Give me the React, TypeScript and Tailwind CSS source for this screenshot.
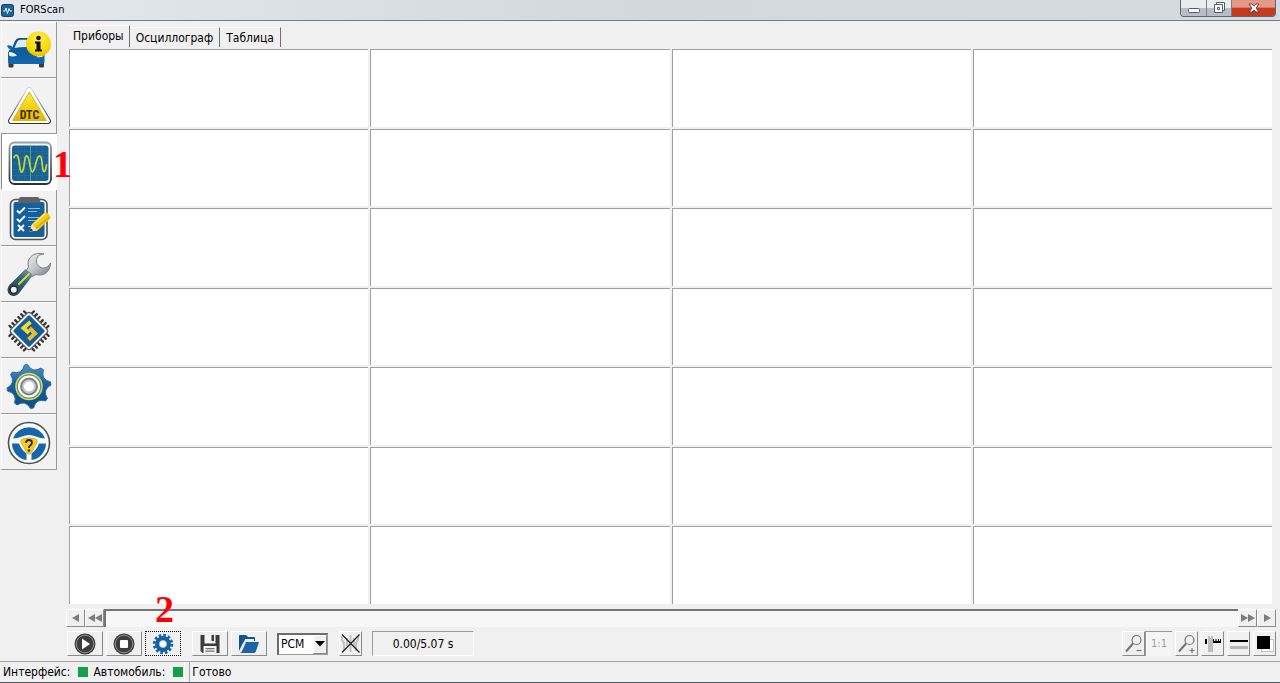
import { useState, type ReactNode } from "react"

const raised = "border border-t-white border-l-white border-r-[#8a8a8a] border-b-[#8a8a8a] bg-[#f0f0f0]"

function CarIcon() {
    return (
        <svg viewBox="0 0 55 55" className="h-[55px] w-[55px]">
            <defs>
                <linearGradient id="carBody" x1="0" y1="0" x2="0" y2="1">
                    <stop offset="0" stopColor="#0d4f8c" />
                    <stop offset="1" stopColor="#1268ad" />
                </linearGradient>
                <radialGradient id="infoBall" cx="0.5" cy="0.3" r="0.75">
                    <stop offset="0" stopColor="#fff04a" />
                    <stop offset="0.7" stopColor="#f7d707" />
                    <stop offset="1" stopColor="#d9b300" />
                </radialGradient>
            </defs>
            <rect x="7.500" y="38" width="5" height="7.500" rx="1" fill="#3b3b3b" />
            <rect x="38" y="38" width="5" height="7.500" rx="1" fill="#3b3b3b" />
            <path d="M11 26 L14 19 Q15.500 16 19 16 H33 Q36 16 37 19 L40 26 Q43.500 28 43.500 32 V40 Q43.500 42 41.500 42 H9 Q7 42 7 40 V32 Q7 28 11 26 Z" fill="url(#carBody)" />
            <path d="M13.500 26 L16 20 Q17 17.800 19.500 17.800 H32 L37 26 Q25 24 13.500 26 Z" fill="#dcebf6" />
            <path d="M6 23.500 Q10 22.500 11.500 25 L11 27 Q7 28 6 23.500 Z" fill="#1268ad" />
            <path d="M8 30 Q13 30 16 33.500 Q11 35.500 8 33.500 Z" fill="#eef6fb" />
            <path d="M42.500 31.500 Q38 32 35.500 35 Q40 36 42.500 34 Z" fill="#eef6fb" />
            <circle cx="37.500" cy="22" r="12.500" fill="url(#infoBall)" />
            <circle cx="37.500" cy="16" r="2.300" fill="#111" />
            <path d="M34 19.500 H39.500 V27.500 H41 V29.500 H34 V27.500 H35.500 V21.500 H34 Z" fill="#111" />
        </svg>
    )
}

function DtcIcon() {
    return (
        <svg viewBox="0 0 55 55" className="h-[55px] w-[55px]">
            <defs>
                <linearGradient id="dtcFill" x1="0" y1="0" x2="0" y2="1">
                    <stop offset="0" stopColor="#f9e94d" />
                    <stop offset="0.6" stopColor="#f2cf0c" />
                    <stop offset="1" stopColor="#e2b40a" />
                </linearGradient>
                <linearGradient id="dtcEdge" x1="0" y1="0" x2="0" y2="1">
                    <stop offset="0" stopColor="#d5d5d5" />
                    <stop offset="1" stopColor="#303030" />
                </linearGradient>
            </defs>
            <path d="M28.300 12 L47 43 H10 Z" fill="#fff" stroke="url(#dtcEdge)" strokeWidth="6" strokeLinejoin="round" />
            <path d="M28.300 12 L47 43 H10 Z" fill="#fff" stroke="#fff" strokeWidth="4" strokeLinejoin="round" />
            <path d="M28.300 14 L45.500 42.500 H11.500 Z" fill="url(#dtcFill)" stroke="#dcb613" strokeWidth="1" strokeLinejoin="round" />
            <text x="28.500" y="41" textAnchor="middle" fontSize="12" fontWeight="700" fill="#3b3206" className="font-['Liberation_Sans_Narrow','Roboto_Condensed','Open_Sans_Condensed','DejaVu_Sans_Condensed',sans-serif]">DTC</text>
        </svg>
    )
}

function ScopeIcon() {
    return (
        <svg viewBox="0 0 55 55" className="-ml-px h-[55px] w-[55px]">
            <defs>
                <linearGradient id="scopeEdge" x1="0" y1="0" x2="0" y2="1">
                    <stop offset="0" stopColor="#9aa0a5" />
                    <stop offset="1" stopColor="#2e3338" />
                </linearGradient>
            </defs>
            <rect x="8.500" y="8.500" width="41.500" height="41.500" rx="5" fill="#f6f8f9" stroke="url(#scopeEdge)" strokeWidth="1.800" />
            <rect x="11" y="11.500" width="36.500" height="35.500" rx="3" fill="#1a6194" />
            <path d="M17.500 12 V47 M23.500 12 V47 M35.500 12 V47 M41.500 12 V47 M12 17.500 H47 M12 23.500 H47 M12 29.500 H47 M12 35.500 H47 M12 41.500 H47" stroke="#2a709f" strokeWidth="0.600" />
            <path d="M29.500 12 V47" stroke="#4fa58b" strokeWidth="1" />
            <path d="M13 23.500 C14.500 20 17 20 18 27 C19 35 19.500 39 21 38 C24 35 23 21 26 22 C29 23 28.500 38 31.500 38 C34.500 37 35 22 38.500 22 C42.500 22 40 38 43.500 37.500 C44.500 37 45 34 45.500 31" fill="none" stroke="#bfd63d" strokeWidth="1.800" strokeLinecap="round" />
        </svg>
    )
}

function ChecklistIcon() {
    return (
        <svg viewBox="0 0 55 55" className="h-[55px] w-[55px]">
            <rect x="9.500" y="9.500" width="36.500" height="40" rx="5" fill="#f5f7f8" stroke="#4c5259" strokeWidth="1.600" />
            <rect x="12.500" y="12" width="31" height="35" rx="2" fill="#155f9c" />
            <path d="M20 7 H36 Q38 7 38.500 9 L40 13 H16.500 L18 9 Q18 7 20 7 Z" fill="#5c6268" />
            <path d="M16 20.500 L18.500 23 L24 17.500 M16 29 L18.500 31.500 L24 26 M17 35 L23 41 M23 35 L17 41" fill="none" stroke="#fff" strokeWidth="1.800" />
            <path d="M27 18.500 H39 M27 21.500 H36 M27 27.500 H39 M27 30.500 H36 M27 36.500 H34" stroke="#8fb9d8" strokeWidth="1" />
            <path d="M28.500 41.500 L31 34 L43 23 Q45 21.500 48 24.500 Q50.500 27.500 48.500 29.500 L36.500 40.500 Z" fill="#f4cc16" />
            <path d="M34.500 38.500 L48.500 27" stroke="#d9a50c" strokeWidth="1.500" />
            <path d="M32.500 34.500 L44.500 23.500" stroke="#fbe676" strokeWidth="1.500" />
            <path d="M28.500 41.500 L31 34 L36.500 40.500 Z" fill="#efe3c4" />
            <path d="M28.500 41.500 L29.700 38 L32 40.500 Z" fill="#333" />
        </svg>
    )
}

function WrenchIcon() {
    return (
        <svg viewBox="0 0 55 55" className="h-[55px] w-[55px]">
            <defs>
                <linearGradient id="steel" x1="0" y1="0" x2="1" y2="1">
                    <stop offset="0" stopColor="#f2f2f2" />
                    <stop offset="0.5" stopColor="#c2c4c6" />
                    <stop offset="1" stopColor="#73777b" />
                </linearGradient>
                <linearGradient id="grip" x1="1" y1="0" x2="0" y2="1">
                    <stop offset="0" stopColor="#9a9ea1" />
                    <stop offset="0.400" stopColor="#2f6580" />
                    <stop offset="1" stopColor="#35393d" />
                </linearGradient>
            </defs>
            <path d="M39 7.500 C32 6.500 25 13 27.500 21 L25 25 L31 30.500 L35 28.500 C43 31 49.500 25 49.500 17 C47.500 21 43.500 23 40 21.500 C36 20 34.500 16 36 12 C37 9.500 38.500 8.500 43 8 Z" fill="url(#steel)" stroke="#7d8185" strokeWidth="1" />
            <path d="M24.500 23 L32 29 L19 46 Q16 50.500 11.500 50 Q6.500 48.500 6.500 43.500 Q7 39.500 10.500 37 Z" fill="url(#grip)" />
            <path d="M18 38 L28 28" stroke="#d4dc36" strokeWidth="2" strokeLinecap="round" />
            <circle cx="12.800" cy="43.700" r="3.600" fill="#f0f0f0" stroke="#1f2326" strokeWidth="1.300" />
        </svg>
    )
}

function ChipIcon() {
    const pins = [-11.5, -7.5, -3.5, 1, 5, 9]
    return (
        <svg viewBox="0 0 55 55" className="h-[55px] w-[55px]">
            <g transform="translate(28 29) rotate(45)">
                {pins.map((p) => (
                    <g key={p} fill="#343434">
                        <rect x={p} y="-18.500" width="2.300" height="37" rx="1" />
                        <rect x="-18.500" y={p} width="37" height="2.300" rx="1" />
                    </g>
                ))}
                <rect x="-14" y="-14" width="28" height="28" rx="3" fill="#f4f5f5" stroke="#55595c" strokeWidth="1.200" />
                <rect x="-11.500" y="-11.500" width="23" height="23" rx="1.500" fill="#155d98" />
            </g>
            <path d="M29.500 20 L22.500 26 L28 31" fill="none" stroke="#f4d936" strokeWidth="4" />
            <path d="M28.500 26 L34 31.500 L27.500 37.500" fill="none" stroke="#e6c02a" strokeWidth="4" />
        </svg>
    )
}

function GearIcon() {
    const at = (deg: number, r: number) => {
        const a = (deg * Math.PI) / 180
        return `${(28 + r * Math.cos(a)).toFixed(2)} ${(28.5 + r * Math.sin(a)).toFixed(2)}`
    }
    const teeth = Array.from({ length: 8 }, (_, i) => -98 + i * 45)
    const outline = teeth
        .map((t, i) => `${i ? "L" : "M"}${at(t - 4, 22)} L${at(t + 4, 22)} Q${at(t + 22.5, 13.5)} ${at(t + 41, 22)}`)
        .join(" ") + " Z"

    return (
        <svg viewBox="0 0 55 55" className="h-[55px] w-[55px]">
            <defs>
                <linearGradient id="gearBlue" x1="0" y1="0" x2="0" y2="1">
                    <stop offset="0" stopColor="#4f91c4" />
                    <stop offset="0.450" stopColor="#17609f" />
                    <stop offset="1" stopColor="#0d4c85" />
                </linearGradient>
            </defs>
            <path d={outline} fill="url(#gearBlue)" stroke="#2b6a9e" strokeWidth="1" strokeLinejoin="round" />
            <circle cx="28" cy="28.500" r="13" fill="#6f8c8c" stroke="#d6de4a" strokeWidth="1.500" />
            <circle cx="28" cy="28.500" r="10" fill="#7b8084" stroke="#fff" strokeWidth="2" />
            <circle cx="28" cy="28.500" r="6" fill="#fff" stroke="#c3c7ca" strokeWidth="2" />
        </svg>
    )
}

function WheelIcon() {
    return (
        <svg viewBox="0 0 55 55" className="h-[55px] w-[55px]">
            <circle cx="28" cy="29" r="20.500" fill="#fafafa" stroke="#4d5155" strokeWidth="1.600" />
            <path d="M12 24.500 A17 17 0 0 1 44 24.500 Q39 24.500 35 22.500 Q28 19.500 21 22.500 Q17 24.500 12 24.500 Z" fill="#1767a8" />
            <path d="M11 29.500 L18 29.500 Q20 35.500 25.500 39.500 L25.500 46 A17 17 0 0 1 11 29.500 Z" fill="#1767a8" />
            <path d="M45 29.500 L38 29.500 Q36 35.500 30.500 39.500 L30.500 46 A17 17 0 0 0 45 29.500 Z" fill="#1767a8" />
            <path d="M21.500 25 Q28 22.500 34.500 25 Q37 26 36 28.500 L30 39 Q28 41.500 26 39 L20 28.500 Q19 26 21.500 25 Z" fill="#f3cf19" stroke="#d3ad14" strokeWidth="0.800" />
            <path d="M25 29 Q25 26 28 26 Q31 26 31 28.800 Q31 30.500 28.800 31.800 Q28 32.500 28 34" fill="none" stroke="#222" strokeWidth="1.800" />
            <circle cx="28" cy="36.500" r="1.200" fill="#222" />
        </svg>
    )
}

const sections = [
    { label: "Автомобиль", icon: <CarIcon /> },
    { label: "DTC", icon: <DtcIcon /> },
    { label: "Приборы", icon: <ScopeIcon />, mark: "1" },
    { label: "Тесты", icon: <ChecklistIcon /> },
    { label: "Сервис", icon: <WrenchIcon /> },
    { label: "Конфигурация", icon: <ChipIcon /> },
    { label: "Настройки", icon: <GearIcon /> },
    { label: "Справка", icon: <WheelIcon /> },
]

function TitleBar() {
    return (
        <header className="flex h-[21px] shrink-0 items-start justify-between border-b border-[#777c82] bg-linear-to-r from-[#e3e8ee] via-[#d3d8df] to-[#d5dae1] pr-1 pl-px">
            <div className="flex items-center gap-[6px] pt-[3px]">
                <svg viewBox="0 0 13 13" className="h-[13px] w-[13px]">
                    <rect x="0.500" y="0.500" width="12" height="12" rx="2" fill="#19659b" stroke="#1d3e57" />
                    <path d="M2 7 H4 L5 4 L6.500 9.500 L8 4.500 L9 7 H11" fill="none" stroke="#e8f4fb" />
                </svg>
                <h1 className="text-[11px] leading-[14px]">FORScan</h1>
            </div>
            <div className="flex h-[17px] overflow-hidden rounded-b border border-t-0 border-[#62676d]">
                <button aria-label="Свернуть" className="flex w-[26px] items-center justify-center border-r border-[#7b8087] bg-linear-to-b from-[#e9ebee] from-50% to-[#b9bec6] to-50%">
                    <svg viewBox="0 0 12 5" className="mt-1 h-[5px] w-3"><rect x="0.500" y="0.500" width="11" height="4" rx="1" fill="#fff" stroke="#555a66" /></svg>
                </button>
                <button aria-label="Восстановить" className="flex w-[25px] items-center justify-center border-r border-[#7b8087] bg-linear-to-b from-[#e9ebee] from-50% to-[#b9bec6] to-50%">
                    <svg viewBox="0 0 13 12" className="h-3 w-[13px]" fill="#fff" stroke="#555a66">
                        <path d="M3.500 0.500 H11.500 V8.500 H3.500 Z" />
                        <path d="M1.500 2.500 H9.500 V10.500 H1.500 Z" />
                        <path d="M4.500 5.500 H6.500 V7.500 H4.500 Z" />
                    </svg>
                </button>
                <button aria-label="Закрыть" className="flex w-[43px] items-center justify-center bg-linear-to-b from-[#e29a86] from-45% to-[#c63b1c] to-50%">
                    <svg viewBox="0 0 12 10" className="h-[10px] w-3">
                        <path d="M1 1 H4 L6 3 L8 1 H11 L8 5 L11 9 H8 L6 7 L4 9 H1 L4 5 Z" fill="#fff" stroke="#5d4548" />
                    </svg>
                </button>
            </div>
        </header>
    )
}

function Sidebar() {
    const [active, setActive] = useState(2)
    return (
        <nav className="mt-px ml-px flex w-14 shrink-0 flex-col">
            {sections.map((s, i) => (
                <button
                    key={s.label}
                    aria-label={s.label}
                    onClick={() => setActive(i)}
                    className={i === active
                        ? "relative h-14 w-14 border-b border-l border-b-white border-l-[#8a8a8a] bg-white"
                        : "relative h-14 w-14 border-r border-b border-[#999999] bg-[#f2f2f2] shadow-[inset_1px_1px_0_#ffffff]"}
                >
                    {s.icon}
                    {s.mark && <span className="absolute top-2 left-[51px] z-10 font-['Liberation_Serif',serif] text-[38px] leading-[44px] font-bold text-[#fb0007]">{s.mark}</span>}
                </button>
            ))}
        </nav>
    )
}

function Tabs() {
    const [tab, setTab] = useState(0)
    const names = ["Приборы", "Осциллограф", "Таблица"]
    return (
        <div role="tablist" className="ml-[2px] flex h-[26px] items-end text-xs">
            {names.map((name, i) => (
                <button
                    key={name}
                    role="tab"
                    aria-selected={i === tab}
                    onClick={() => setTab(i)}
                    className={i === tab
                        ? "h-[22px] border-t border-r border-t-white border-r-[#6f6f6f] px-[5px] pb-px"
                        : "h-[20px] border-t border-r border-t-white border-r-[#6f6f6f] px-[6px]"}
                >
                    {name}
                </button>
            ))}
        </div>
    )
}

function Arrow({ dir, double = false }: { dir: "left" | "right", double?: boolean }) {
    const left = dir === "left"
    return (
        <button aria-label={left ? "Назад" : "Вперёд"} className={`flex h-[18px] w-[19px] items-center justify-center ${raised}`}>
            <svg viewBox="0 0 14 8" className="h-2 w-[14px]" fill="#7d7d7d">
                {double
                    ? <path d={left ? "M7 0 V8 L0 4 Z M14 0 V8 L7 4 Z" : "M0 0 V8 L7 4 Z M7 0 V8 L14 4 Z"} />
                    : <path d={left ? "M10 0 V8 L3 4 Z" : "M4 0 V8 L11 4 Z"} />}
            </svg>
        </button>
    )
}

function Timeline() {
    return (
        <div className="mt-1 flex shrink-0 items-start">
            <Arrow dir="left" />
            <Arrow dir="left" double />
            <div className="relative h-[18px] flex-1 border-t-2 border-l-2 border-[#747474] bg-[#f7f7f7]">
                <span className="absolute -top-[24px] left-[49px] font-['Liberation_Serif',serif] text-[38px] leading-[44px] font-bold text-[#fb0007]">2</span>
            </div>
            <Arrow dir="right" double />
            <Arrow dir="right" />
        </div>
    )
}

function ToolButton({ label, wide = false, focused = false, children }: { label: string, wide?: boolean, focused?: boolean, children: ReactNode }) {
    return (
        <button
            aria-label={label}
            className={`flex h-[25px] items-center justify-center ${wide ? "w-9" : "w-[23px]"} ${focused ? "border border-dotted border-black bg-[#f0f0f0]" : raised}`}
        >
            {children}
        </button>
    )
}

function Toolbar() {
    return (
        <div className="mt-1 flex h-[30px] shrink-0 items-start justify-between text-xs">
            <div className="ml-px flex items-center">
                <div className="flex gap-[3px]">
                    <ToolButton label="Старт" wide>
                        <svg viewBox="0 0 22 22" className="h-[22px] w-[22px]">
                            <circle cx="11" cy="11" r="10.500" fill="#3d3d3d" />
                            <circle cx="11" cy="11" r="8.800" fill="none" stroke="#a5a5a5" strokeWidth="0.800" />
                            <path d="M8 5.500 V16.500 L16 11 Z" fill="#fff" />
                        </svg>
                    </ToolButton>
                    <ToolButton label="Стоп" wide>
                        <svg viewBox="0 0 22 22" className="h-[22px] w-[22px]">
                            <circle cx="11" cy="11" r="10.500" fill="#3d3d3d" />
                            <circle cx="11" cy="11" r="8.800" fill="none" stroke="#a5a5a5" strokeWidth="0.800" />
                            <rect x="7" y="7" width="8" height="8" rx="1" fill="#fff" />
                        </svg>
                    </ToolButton>
                    <ToolButton label="Параметры" wide focused>
                        <svg viewBox="0 0 22 22" className="h-[22px] w-[22px]">
                            <circle cx="11" cy="11" r="8.700" fill="none" stroke="#1763a5" strokeWidth="3" strokeDasharray="2.600 1.955" />
                            <circle cx="11" cy="11" r="5.700" fill="#fff" stroke="#17609f" strokeWidth="4.500" />
                            <circle cx="11" cy="11" r="3.600" fill="#fff" stroke="#8dbbe0" strokeWidth="0.800" />
                        </svg>
                    </ToolButton>
                </div>
                <div className="ml-[11px] flex gap-[3px]">
                    <ToolButton label="Сохранить" wide>
                        <svg viewBox="0 0 20 20" className="h-5 w-5">
                            <path d="M0.500 1 H19.500 V19 H2.500 L0.500 17 Z" fill="#3b3b3b" />
                            <rect x="4.500" y="1" width="11" height="8.500" fill="#f4f4f4" />
                            <rect x="11.500" y="1" width="2.500" height="6" fill="#3b3b3b" />
                            <rect x="3.500" y="12" width="13" height="7" fill="#f4f4f4" />
                            <rect x="5.500" y="14" width="9" height="1.300" fill="#777" />
                            <rect x="5.500" y="16.500" width="9" height="1.300" fill="#777" />
                        </svg>
                    </ToolButton>
                    <ToolButton label="Открыть" wide>
                        <svg viewBox="0 0 22 20" className="h-5 w-[22px]">
                            <path d="M1 2 Q1 1 2 1 H8 L10 3 H16 Q17 3 17 4 V7 H8 Q6 7 5 9 L1 17 Z" fill="#17548a" />
                            <path d="M7 5 H16 V8 H6 Z" fill="#e3edf4" />
                            <path d="M8 8 H21 L18 17 Q17.500 19 16 19 H2 Q4 18 5 15 Z" fill="#1c65a4" />
                        </svg>
                    </ToolButton>
                </div>
                <div className="relative ml-[10px] h-[22px] w-[51px] border-t-2 border-l-2 border-r border-b border-t-[#6c6c6c] border-l-[#6c6c6c] border-r-[#9a9a9a] border-b-[#9a9a9a] bg-white">
                    <select aria-label="Модуль" className="block h-full w-full appearance-none bg-transparent pl-[2px] text-xs outline-none">
                        <option>PCM</option>
                    </select>
                    <span className={`pointer-events-none absolute top-0 right-0 flex h-full w-[14px] items-center justify-center ${raised}`}>
                        <svg viewBox="0 0 10 6" className="h-[6px] w-[10px]"><path d="M0 0 H10 L5 5.500 Z" fill="#000" /></svg>
                    </span>
                </div>
                <div className="ml-[11px]">
                    <ToolButton label="Сбросить">
                        <svg viewBox="0 0 21 21" className="h-[21px] w-[21px]">
                            <path d="M2 3 V7 Q4 9 4 11 V18 M10.500 2 V19 M18 3 V7 Q16 9 16 11 V18 M7 5 V13 M14 5 V13" stroke="#c2c2c2" strokeWidth="2" fill="none" />
                            <path d="M2 1.500 L19.500 19.500 M19.500 1.500 L2 19.500" stroke="#1d1d1d" strokeWidth="1.200" />
                        </svg>
                    </ToolButton>
                </div>
                <output className="ml-[10px] flex h-[25px] w-[102px] items-center justify-center border-t border-l border-[#9d9d9d] border-r border-b border-r-white border-b-white">0.00/5.07 s</output>
            </div>
            <div className="flex gap-[3px]">
                <div className="flex">
                    <ToolButton label="Уменьшить">
                        <svg viewBox="0 0 18 20" className="h-5 w-[18px]" fill="none" stroke="#757575" strokeWidth="1.200">
                            <circle cx="11.500" cy="6" r="4.500" />
                            <path d="M8 9.500 L1 17.500" strokeWidth="2" />
                            <path d="M11.500 16.500 H16.500" />
                        </svg>
                    </ToolButton>
                    <button className="mr-[3px] h-[25px] w-[27px] border-t border-l border-[#999999] bg-[#f5f5f5] text-[11px] text-[#9c9c9c]">1:1</button>
                    <ToolButton label="Увеличить">
                        <svg viewBox="0 0 18 20" className="h-5 w-[18px]" fill="none" stroke="#757575" strokeWidth="1.200">
                            <circle cx="11.500" cy="6" r="4.500" />
                            <path d="M8 9.500 L1 17.500" strokeWidth="2" />
                            <path d="M11.500 16.500 H16.500 M14 14 V19" />
                        </svg>
                    </ToolButton>
                </div>
                <ToolButton label="Шкала">
                    <svg viewBox="0 0 18 20" className="h-5 w-[18px]">
                        <rect x="1" y="5" width="2" height="5" fill="#000" />
                        <path d="M4 2 H6 V4 H7 V2 H9 V18 H4 Z" fill="#bdbdbd" />
                        <path d="M9 5 H10 V7 H11.500 V5 H12.500 V7 H14 V5 H15 V7 H16 V5 H17 V9 H9 Z" fill="#000" />
                    </svg>
                </ToolButton>
                <ToolButton label="Толщина линии">
                    <svg viewBox="0 0 18 20" className="h-5 w-[18px]">
                        <rect x="0" y="6" width="18" height="2" fill="#000" />
                        <rect x="0" y="12" width="18" height="3" fill="#b5b5b5" />
                    </svg>
                </ToolButton>
                <ToolButton label="Цвет фона">
                    <svg viewBox="0 0 18 20" className="h-5 w-[18px]">
                        <rect x="5.500" y="5.500" width="12" height="12" fill="#fff" stroke="#c4c4c4" />
                        <rect x="1" y="2" width="13" height="13" fill="#000" />
                    </svg>
                </ToolButton>
            </div>
        </div>
    )
}

function StatusBar() {
    return (
        <footer className="flex h-[22px] shrink-0 border-t border-[#a6a6a6] border-b border-b-[#55585c] text-xs">
            <div className="ml-[2px] flex items-center border-r border-white pr-px pl-px">
                <span>Интерфейс:</span>
                <span className="ml-2 h-[10px] w-[10px] bg-[#16a049]" />
                <span className="ml-[5px]">Автомобиль:</span>
                <span className="ml-2 h-[10px] w-[10px] bg-[#16a049]" />
            </div>
            <p className="ml-1 flex flex-1 items-center border-l border-[#a6a6a6] pl-[2px]">Готово</p>
        </footer>
    )
}

export default function App() {
    return (
        <div className="flex h-screen flex-col bg-[#f0f0f0] font-['DejaVu_Sans_Condensed','Noto_Sans',sans-serif] text-black">
            <TitleBar />
            <div className="flex min-h-0 flex-1">
                <Sidebar />
                <main className="flex min-w-0 flex-1 flex-col pr-1 pl-[9px]">
                    <Tabs />
                    <section aria-label="Приборы" className="mt-[2px] mr-1 mb-px ml-[3px] grid min-h-0 flex-1 auto-rows-fr grid-cols-4 gap-[2px]">
                        {Array.from({ length: 28 }, (_, i) => (
                            <div key={i} className="border-t border-l border-[#a0a0a0] bg-white" />
                        ))}
                    </section>
                    <Timeline />
                    <Toolbar />
                </main>
            </div>
            <StatusBar />
        </div>
    )
}
